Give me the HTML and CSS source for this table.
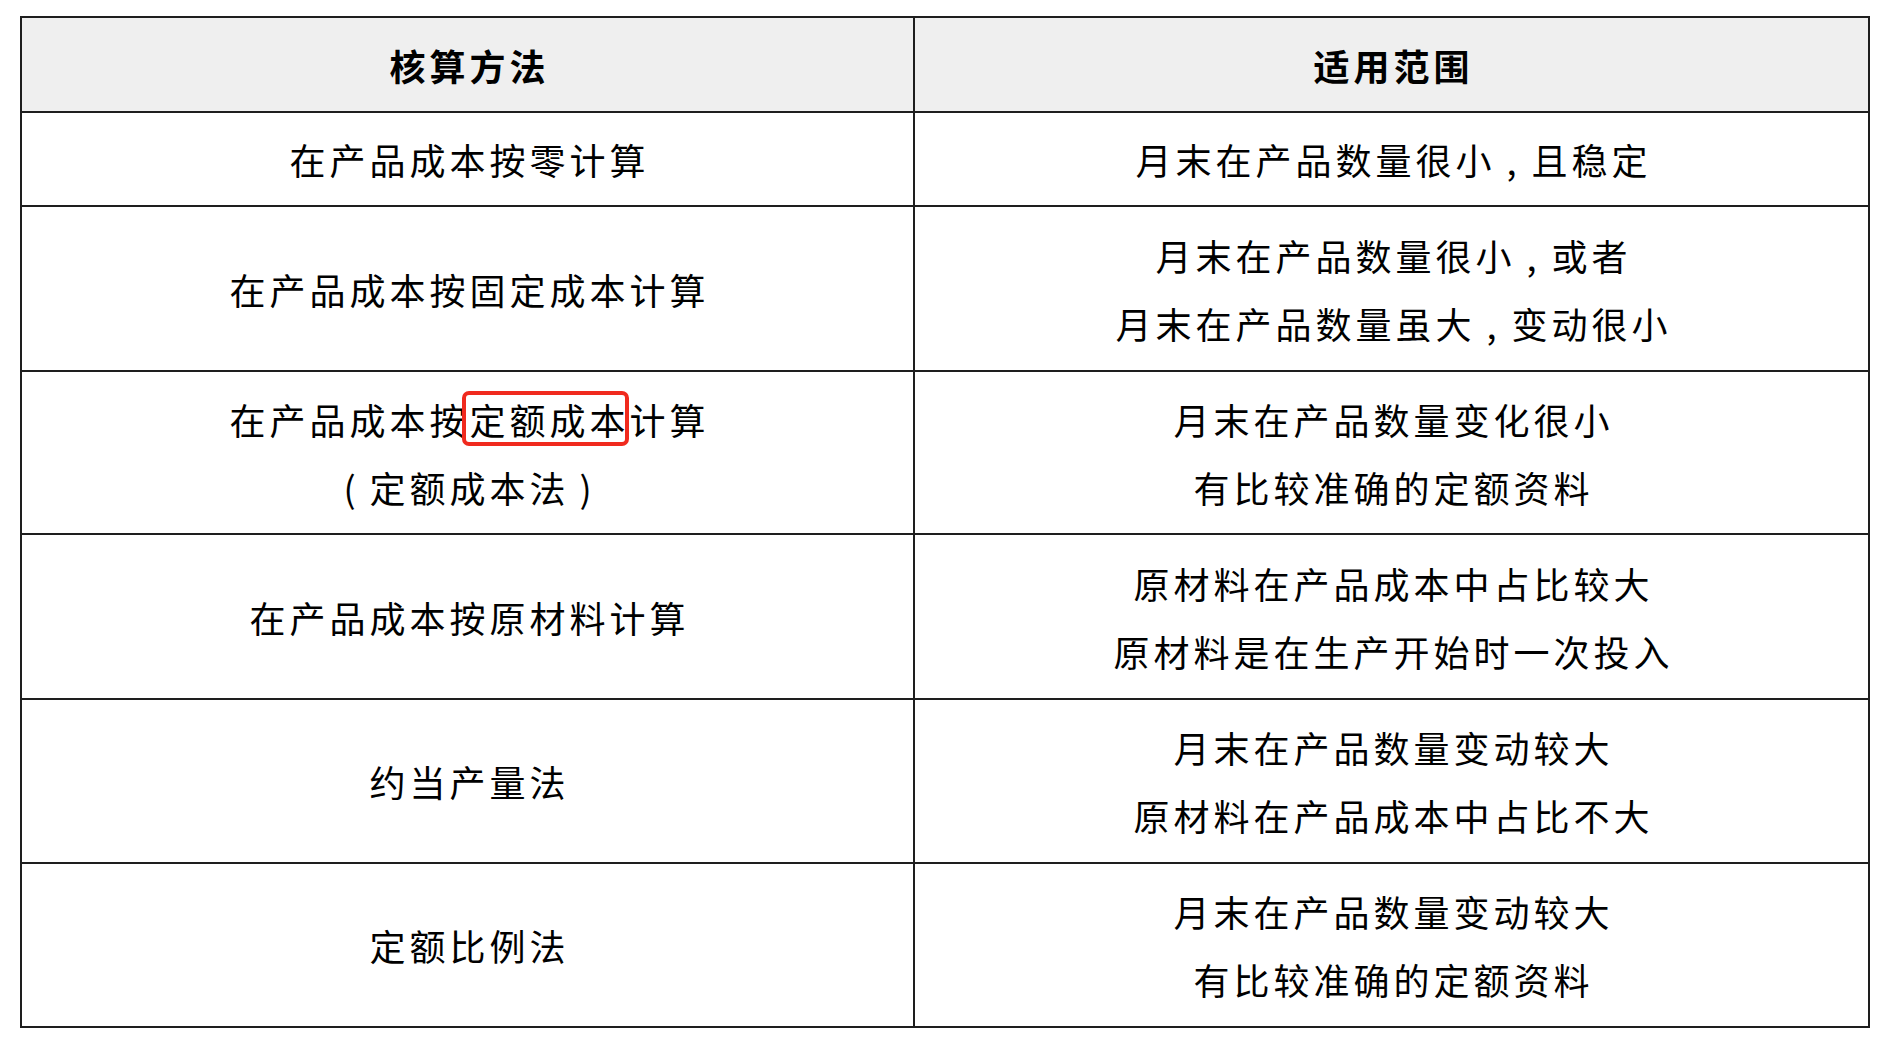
FILE: index.html
```html
<!DOCTYPE html>
<html lang="zh-CN">
<head>
<meta charset="utf-8">
<title>在产品成本核算方法</title>
<link rel="stylesheet" href="styles.css">
</head>
<body>
<div class="table">
  <div class="cell head">核算方法</div>
  <div class="cell head">适用范围</div>

  <div class="cell"><p>在产品成本按零计算</p></div>
  <div class="cell"><p>月末在产品数量很小<span class="pc">,</span>且稳定</p></div>

  <div class="cell"><p>在产品成本按固定成本计算</p></div>
  <div class="cell"><p>月末在产品数量很小<span class="pc">,</span>或者</p><p>月末在产品数量虽大<span class="pc">,</span>变动很小</p></div>

  <div class="cell"><p>在产品成本按<span class="mark">定额成本</span>计算</p><p><span class="pc">(</span>定额成本法<span class="pc">)</span></p></div>
  <div class="cell"><p>月末在产品数量变化很小</p><p>有比较准确的定额资料</p></div>

  <div class="cell"><p>在产品成本按原材料计算</p></div>
  <div class="cell"><p>原材料在产品成本中占比较大</p><p>原材料是在生产开始时一次投入</p></div>

  <div class="cell"><p>约当产量法</p></div>
  <div class="cell"><p>月末在产品数量变动较大</p><p>原材料在产品成本中占比不大</p></div>

  <div class="cell"><p>定额比例法</p></div>
  <div class="cell"><p>月末在产品数量变动较大</p><p>有比较准确的定额资料</p></div>
</div>
</body>
</html>
```

FILE: styles.css
```css
html, body {
  margin: 0;
  padding: 0;
  background: #ffffff;
}

body {
  padding: 16px 0 0 20px;
  font-family: "Noto Sans CJK SC", "Noto Sans", sans-serif;
  color: #000;
}

.table {
  display: grid;
  grid-template-columns: 893px 955px;
  grid-template-rows: 95px 94px 165px 163px 165px 164px 164px;
  width: 1850px;
  box-sizing: border-box;
  border-left: 2px solid #1e1e1e;
  border-top: 2px solid #1e1e1e;
}

.cell {
  box-sizing: border-box;
  border-right: 2px solid #1e1e1e;
  border-bottom: 2px solid #1e1e1e;
  display: flex;
  flex-direction: column;
  justify-content: center;
  align-items: center;
  padding-left: 4px;
  font-size: 36px;
  letter-spacing: 4px;
  line-height: 68px;
  background: #ffffff;
}

.cell p {
  margin: 0;
  white-space: nowrap;
}

.head {
  background: #efefef;
  font-weight: 700;
}

.pc {
  display: inline-block;
  width: 36px;
  text-align: center;
}

.mark {
  position: relative;
}

.mark::after {
  content: "";
  position: absolute;
  left: -7px;
  right: 1px;
  top: -2px;
  bottom: -1px;
  border: 4px solid #f02a1e;
  border-radius: 7px;
  pointer-events: none;
}
```
